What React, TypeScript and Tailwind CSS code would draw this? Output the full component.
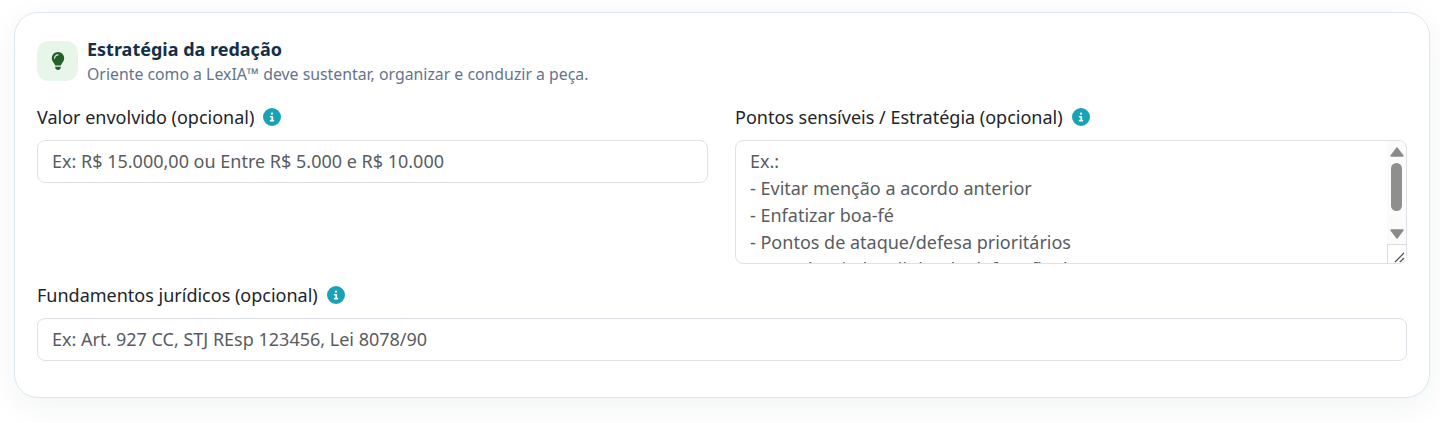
import { FaCircleInfo, FaLightbulb } from "react-icons/fa6";

const Label = ({ text }: { text: string }) => {
    return (
        <div className="flex flex-row items-center gap-[9px] h-[24px] mb-[11px] text-[18px] leading-[24px] text-[#212529]">
            <span>{text}</span>
            <FaCircleInfo size={18} className="text-[#17a2b8]" />
        </div>
    );
};

const Input = ({ placeholder }: { placeholder: string }) => {
    return (
        <div className="w-full h-[43px] flex items-center px-[14px] bg-white border border-[#dee2e6] rounded-[8px] text-[18px] text-[#595c5f]">
            {placeholder}
        </div>
    );
};

const Scrollbar = () => {
    return (
        <div className="w-[19px] h-full shrink-0 flex flex-col items-center bg-[#fbfbfb]">
            <svg width="14" height="10" viewBox="0 0 14 10" className="mt-[6px] shrink-0">
                <path d="M7 1 L13 9 L1 9 Z" fill="#8a8a8a" stroke="#8a8a8a" strokeWidth="1.4" strokeLinejoin="round" />
            </svg>
            <div className="w-[11px] h-[48px] mt-[6px] rounded-full bg-[#8f8f8f] shrink-0" />
            <svg width="14" height="10" viewBox="0 0 14 10" className="mt-[18px] shrink-0">
                <path d="M1 1 L13 1 L7 9 Z" fill="#8a8a8a" stroke="#8a8a8a" strokeWidth="1.4" strokeLinejoin="round" />
            </svg>
            <div className="mt-[5px] w-[19px] h-[19px] bg-white border-l border-t border-[#dcdcdc] flex items-end justify-end shrink-0">
                <svg width="12" height="12" viewBox="0 0 12 12">
                    <path d="M1 11 L10 2 M6 11 L10 7" stroke="#555" strokeWidth="1.3" fill="none" />
                </svg>
            </div>
        </div>
    );
};

export default function App() {
    return (
        <div className="w-[1440px] h-[423px] overflow-hidden bg-white pt-[12px] pl-[14px] pr-[10px] [font-family:'Noto_Sans',sans-serif]">
            <div className="w-[1416px] h-[386px] bg-white border border-[#dce8f0] rounded-[24px] shadow-[0_8px_32px_rgba(15,47,75,0.06)] pt-[23px] pl-[22px] pr-[22px]">
                <div className="flex flex-row items-center gap-[9px] h-[50px] mb-[19px]">
                    <div className="w-[41px] h-[40px] rounded-[12px] bg-[#e8f5e9] flex items-center justify-center text-[#256029]">
                        <FaLightbulb size={18} />
                    </div>
                    <div className="flex flex-col">
                        <span className="text-[18px] leading-[26px] font-bold text-[#12304a]">Estratégia da redação</span>
                        <span className="text-[15.84px] leading-[24px] text-[#64748b]">Oriente como a LexIA™ deve sustentar, organizar e conduzir a peça.</span>
                    </div>
                </div>
                <div className="grid grid-cols-[671px_672px] gap-x-[27px]">
                    <div>
                        <Label text="Valor envolvido (opcional)" />
                        <Input placeholder="Ex: R$ 15.000,00 ou Entre R$ 5.000 e R$ 10.000" />
                    </div>
                    <div>
                        <Label text="Pontos sensíveis / Estratégia (opcional)" />
                        <div className="w-full h-[124px] flex flex-row bg-white border border-[#dee2e6] rounded-[8px] overflow-hidden">
                            <div className="flex-1 pl-[14px] pt-[7px] text-[18px] leading-[27px] text-[#595c5f] overflow-hidden">
                                <p>Ex.:</p>
                                <p>- Evitar menção a acordo anterior</p>
                                <p>- Enfatizar boa-fé</p>
                                <p>- Pontos de ataque/defesa prioritários</p>
                                <p>- Tom desejado e linha de defesa final</p>
                            </div>
                            <Scrollbar />
                        </div>
                    </div>
                </div>
                <div className="mt-[19px]">
                    <Label text="Fundamentos jurídicos (opcional)" />
                    <Input placeholder="Ex: Art. 927 CC, STJ REsp 123456, Lei 8078/90" />
                </div>
            </div>
        </div>
    );
}
